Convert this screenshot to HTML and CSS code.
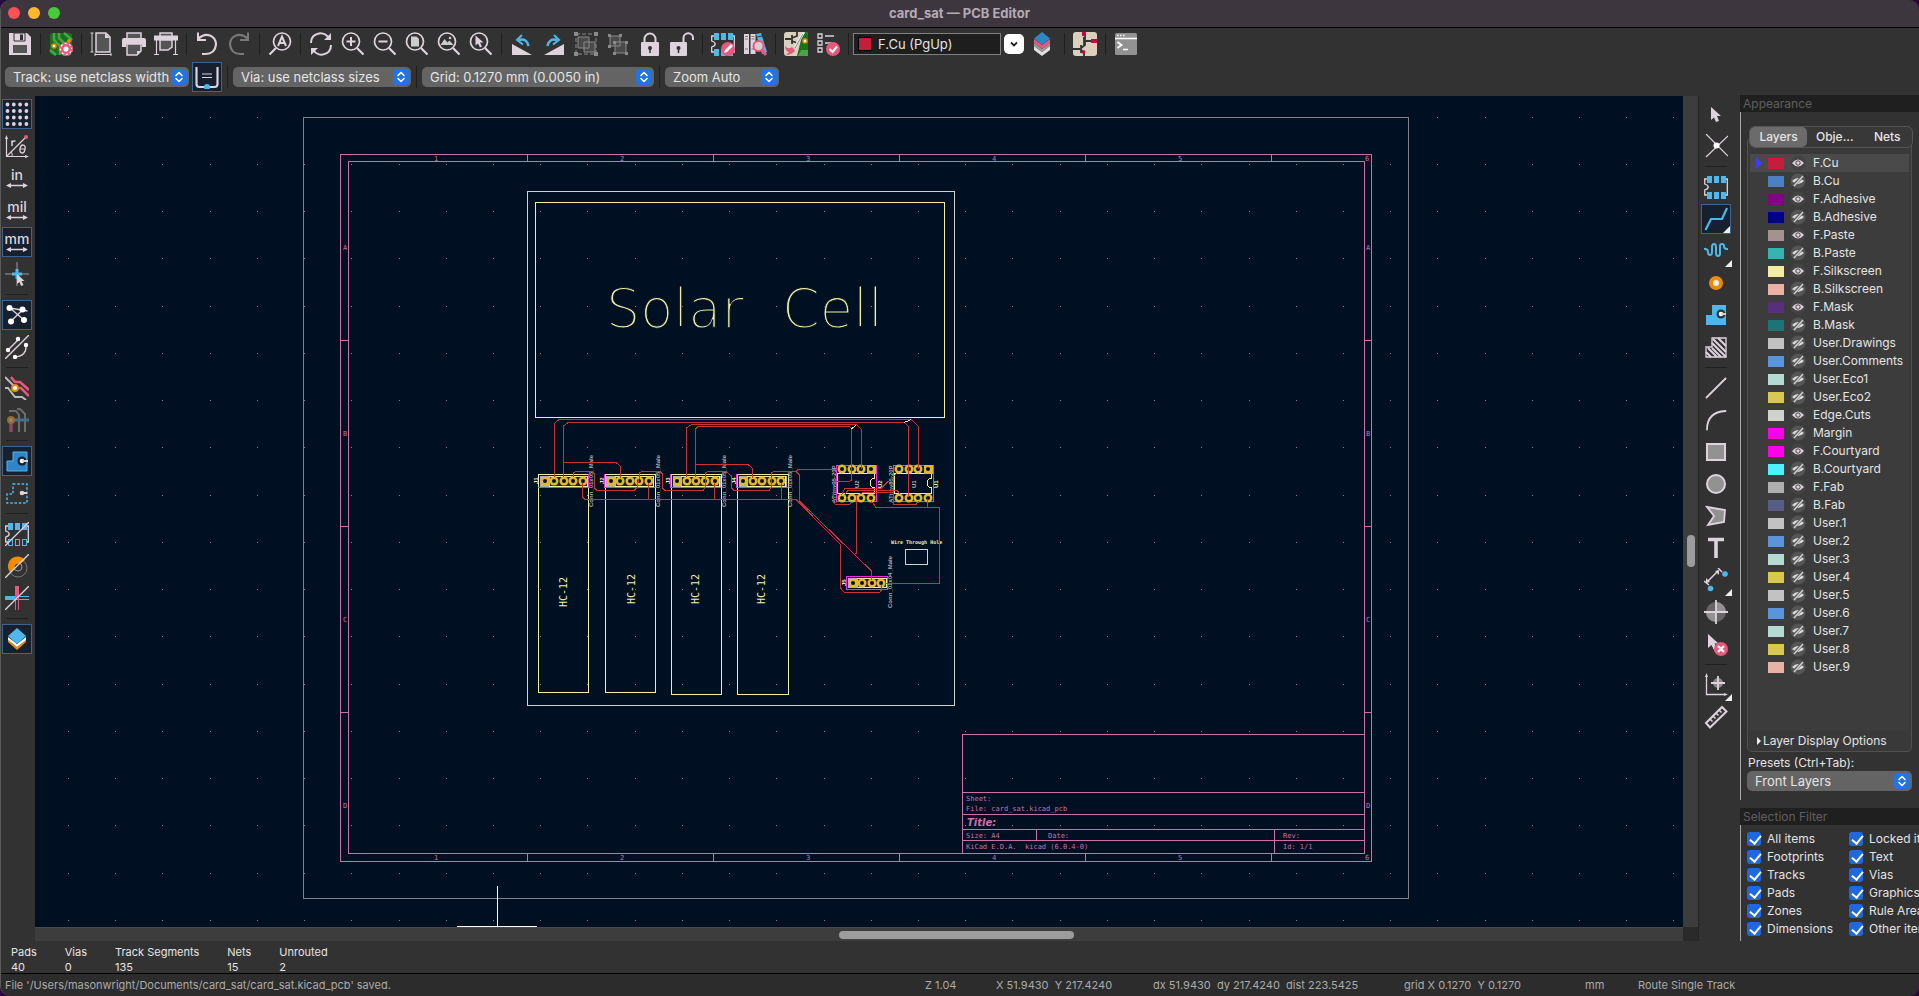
FILE: index.html
```html
<!DOCTYPE html>
<html lang="en">
<head>
<meta charset="utf-8">
<title>card_sat — PCB Editor</title>
<link rel="stylesheet" href="styles.css">
</head>
<body>
<svg class="defs" aria-hidden="true">
  <symbol id="updown" viewBox="0 0 16 16"><rect width="16" height="16" rx="4" fill="#2374e1"/><path d="M5 6.5l3-3 3 3M5 9.5l3 3 3-3" fill="none" stroke="#fff" stroke-width="1.6" stroke-linecap="round" stroke-linejoin="round"/></symbol>
  <symbol id="eye-on" viewBox="0 0 16 16"><circle cx="8" cy="8" r="7.5" fill="#434343"/><path d="M2 8q6-7 12 0q-6 7-12 0z" fill="#ded3dd"/><circle cx="8" cy="8" r="2.2" fill="#ded3dd" stroke="#434343"/></symbol>
  <symbol id="eye-off" viewBox="0 0 16 16"><circle cx="8" cy="8" r="7.5" fill="#555"/><path d="M2 8q6-6 12 0q-6 6-12 0z" fill="#d8d8d8"/><path d="M3.5 12.5l9-9" stroke="#555" stroke-width="3"/><path d="M4 13l9-10" stroke="#d8d8d8" stroke-width="1.3"/></symbol>
  <symbol id="corner" viewBox="0 0 7 7"><path d="M7 0v7H0z" fill="#eee"/></symbol>
  <symbol id="footprint" viewBox="0 0 24 24"><path d="M3 4H.7v5q3.5 1 3.500 3t-3.500 3v5H3M21 4h2.300v16H21" fill="none" stroke="#ded3dd" stroke-width="1.300"/><path d="M3 1h5v7H3zM10 1h5v7h-5zM17 1h5v7h-5zM3 17h5v7H3zM10 17h5v7h-5zM17 17h5v7h-5z" fill="#4fb8eb"/></symbol>
</svg>

<div class="window">
  <header class="titlebar">
    <div class="lights"><button class="light red" aria-label="Close"></button><button class="light yellow" aria-label="Minimize"></button><button class="light green" aria-label="Zoom"></button></div>
    <h1>card_sat — PCB Editor</h1>
  </header>

  <div class="toolbar top" role="toolbar" aria-label="Main">
    <button class="tool" aria-label="Save"><svg viewBox="0 0 24 24"><path d="M1 1h18l4 4v18H1z" fill="#ded3dd"/><path d="M6 1h11v8H6z" fill="#ded3dd" stroke="#323232"/><path d="M12 2.500h3V8h-3z" fill="#323232"/><path d="M5 13h14v8H5z" fill="#555"/></svg></button>
    <i class="sep"></i>
    <button class="tool" aria-label="Board setup"><svg viewBox="0 0 24 24"><rect x="1" y="1" width="22" height="22" rx="3" fill="#197319"/><path d="M5 1v7l6 6v9M10 1v5l7 7M15 1l8 7M1 18l6 5" fill="none" stroke="#4fa04a" stroke-width="2.500"/><circle cx="5" cy="14" r="2" fill="#fff" stroke="#ee8b00" stroke-width="1.500"/><circle cx="20" cy="9" r="2" fill="#ee8b00"/><circle cx="17" cy="17" r="4" fill="none" stroke="#fff" stroke-width="5"/><circle cx="17" cy="17" r="6" fill="none" stroke="#e8587c" stroke-width="2.500" stroke-dasharray="2.500 2.210"/><circle cx="17" cy="17" r="3.800" fill="#fff" stroke="#e8587c" stroke-width="2.500"/></svg></button>
    <i class="sep"></i>
    <button class="tool" aria-label="Page settings"><svg viewBox="0 0 24 24"><path d="M6 1h10l4 4v15H6z" fill="#555" stroke="#ded3dd" stroke-width="1.500"/><path d="M15 1v5h5z" fill="#ded3dd"/><path d="M2 1v19M.500 1h3M.500 20h3M5 22.500h16M5 21v3M21 21v3" stroke="#ded3dd"/></svg></button>
    <button class="tool" aria-label="Print"><svg viewBox="0 0 24 24"><path d="M5 1h14v6H5z" fill="#555" stroke="#ded3dd" stroke-width="1.500"/><path d="M2 6h20q2 0 2 2v7h-4v-3H4v3H0V8q0-2 2-2z" fill="#ded3dd"/><path d="M5 12h14v7l-4 4H5z" fill="#555" stroke="#ded3dd" stroke-width="1.500"/><path d="M15 23v-4h4z" fill="#ded3dd"/></svg></button>
    <button class="tool" aria-label="Plot"><svg viewBox="0 0 24 24"><path d="M6 1h12v5H6z" fill="#555" stroke="#ded3dd" stroke-width="1.500"/><path d="M0 3.500h24v5H0z" fill="#ded3dd"/><path d="M2.500 8v14M21.500 8v14M0 22.500h5M19 22.500h5" stroke="#ded3dd" stroke-width="1.200"/><path d="M6 8h12v7l-4 3H6z" fill="#555" stroke="#ded3dd" stroke-width="1.500"/></svg></button>
    <i class="sep"></i>
    <button class="tool" aria-label="Undo"><svg viewBox="0 0 24 24"><path d="M3 7q6-6 12-3.500Q21 6 21 12.500 20 22 10.500 22H7" fill="none" stroke="#ded3dd" stroke-width="2.200"/><path d="M3 .500V8h8" fill="none" stroke="#ded3dd" stroke-width="2"/></svg></button>
    <button class="tool" aria-label="Redo" disabled><svg viewBox="0 0 24 24"><path d="M21 7q-6-6-12-3.500Q3 6 3 12.500 4 22 13.500 22H17" fill="none" stroke="#787878" stroke-width="2.200"/><path d="M21 .500V8h-8" fill="none" stroke="#787878" stroke-width="2"/></svg></button>
    <i class="sep"></i>
    <button class="tool" aria-label="Find"><svg viewBox="0 0 24 24"><circle cx="14" cy="9.500" r="8.500" fill="none" stroke="#ded3dd" stroke-width="1.700"/><path d="M8 16l-6.500 6.500" stroke="#ded3dd" stroke-width="2.200"/><path d="M10 14l4-9.500L18 14M11.500 11h5" fill="none" stroke="#ded3dd" stroke-width="2"/></svg></button>
    <i class="sep"></i>
    <button class="tool" aria-label="Refresh"><svg viewBox="0 0 24 24"><path d="M2 11q0-8 8-9.500 6-1 11 5.500M22 13q0 8-8 9.500-6 1-11-5.500" fill="none" stroke="#ded3dd" stroke-width="2"/><path d="M22 1v7h-7zM2 23v-7h7z" fill="#ded3dd"/></svg></button>
    <button class="tool" aria-label="Zoom in"><svg viewBox="0 0 24 24"><circle cx="10" cy="9.500" r="8.500" fill="none" stroke="#ded3dd" stroke-width="1.700"/><path d="M16 16l6.500 6.500" stroke="#ded3dd" stroke-width="2.200"/><path d="M5.500 9.500h9M10 5v9" stroke="#ded3dd" stroke-width="2"/></svg></button>
    <button class="tool" aria-label="Zoom out"><svg viewBox="0 0 24 24"><circle cx="10" cy="9.500" r="8.500" fill="none" stroke="#ded3dd" stroke-width="1.700"/><path d="M16 16l6.500 6.500" stroke="#ded3dd" stroke-width="2.200"/><path d="M5.500 9.500h9" stroke="#ded3dd" stroke-width="2"/></svg></button>
    <button class="tool" aria-label="Zoom to fit"><svg viewBox="0 0 24 24"><circle cx="10" cy="9.500" r="8.500" fill="none" stroke="#ded3dd" stroke-width="1.700"/><path d="M16 16l6.500 6.500" stroke="#ded3dd" stroke-width="2.200"/><path d="M6 4.500h5.500L14 7v7.500H6z" fill="#ccc"/></svg></button>
    <button class="tool" aria-label="Zoom to objects"><svg viewBox="0 0 24 24"><circle cx="10" cy="9.500" r="8.500" fill="none" stroke="#ded3dd" stroke-width="1.700"/><path d="M16 16l6.500 6.500" stroke="#ded3dd" stroke-width="2.200"/><path d="M3.500 13l4-6 3 3.500 2-2 4 4.500z" fill="#ccc"/><circle cx="13" cy="6" r="1.300" fill="#ccc"/></svg></button>
    <button class="tool" aria-label="Zoom to selection"><svg viewBox="0 0 24 24"><circle cx="10" cy="9.500" r="8.500" fill="none" stroke="#ded3dd" stroke-width="1.700"/><path d="M16 16l6.500 6.500" stroke="#ded3dd" stroke-width="2.200"/><path d="M6.500 3.500v10l2.500-2 2 4 2-1-2-4h3.500z" fill="#ded3dd"/></svg></button>
    <i class="sep"></i>
    <button class="tool" aria-label="Rotate counterclockwise"><svg viewBox="0 0 24 24"><path d="M2 12v11h20z" fill="#ded3dd"/><path d="M9 8q8-2 9.500 6" fill="none" stroke="#4fb8eb" stroke-width="2.500"/><path d="M12 3L7 8l6 4.500" fill="none" stroke="#4fb8eb" stroke-width="2"/></svg></button>
    <button class="tool" aria-label="Rotate clockwise"><svg viewBox="0 0 24 24"><path d="M22 12v11H2z" fill="#ded3dd"/><path d="M15 8q-8-2-9.500 6" fill="none" stroke="#4fb8eb" stroke-width="2.500"/><path d="M12 3l5 5-6 4.500" fill="none" stroke="#4fb8eb" stroke-width="2"/></svg></button>
    <button class="tool" aria-label="Group" disabled><svg viewBox="0 0 24 24"><path d="M2 2h20v20H2z" fill="none" stroke="#8a8a8a" stroke-dasharray="4 2"/><path d="M0 0h4v4H0zM20 0h4v4h-4zM0 20h4v4H0zM20 20h4v4h-4z" fill="#8a8a8a"/><path d="M4 5h11v11H4zM10 10h11v10H10z" fill="#4a4a4a" stroke="#8a8a8a"/></svg></button>
    <button class="tool" aria-label="Ungroup" disabled><svg viewBox="0 0 24 24"><path d="M4 4h10v10H4zM9 10h11v11H9z" fill="#4a4a4a" stroke="#8a8a8a"/><path d="M2 2h3v3H2zM13 2h3v3h-3zM2 13h3v3H2zM7 9h3v3H7zM19 9h3v3h-3zM7 20h3v3H7zM19 20h3v3h-3z" fill="#8a8a8a"/></svg></button>
    <button class="tool" aria-label="Lock"><svg viewBox="0 0 24 24"><path d="M6.500 12V7a5.500 5.500 0 0 1 11 0v5" fill="none" stroke="#ded3dd" stroke-width="2"/><rect x="3" y="10" width="18" height="14" rx="1" fill="#ded3dd"/><circle cx="12" cy="16" r="2" fill="#323232"/><path d="M12 16v5" stroke="#323232" stroke-width="1.500"/></svg></button>
    <button class="tool" aria-label="Unlock"><svg viewBox="0 0 24 24"><path d="M13.500 12V6a4.700 4.700 0 0 1 9.500 0v2" fill="none" stroke="#ded3dd" stroke-width="2"/><rect x="0" y="10" width="17" height="14" rx="1" fill="#ded3dd"/><circle cx="8.500" cy="16" r="2" fill="#323232"/><path d="M8.500 16v5" stroke="#323232" stroke-width="1.500"/></svg></button>
    <i class="sep"></i>
    <button class="tool" aria-label="Footprint editor"><svg viewBox="0 0 24 24"><use href="#footprint"/><circle cx="17" cy="17" r="7" fill="#e8587c"/><path d="M13 21l1-3 6-6 2 2-6 6z" fill="#fff"/></svg></button>
    <button class="tool" aria-label="Footprint library browser"><svg viewBox="0 0 24 24"><path d="M1 2h5v20H1zM7.500 2h5v20h-5z" fill="#ded3dd"/><path d="M2 4.500h3M2 7h3M2 17h3M8.500 4.500h3M8.500 7h3M8.500 17h3" stroke="#777"/><path d="M13 2l5-1 6 19-5 2z" fill="#4fb8eb"/><path d="M14 5l5-1" stroke="#323232"/><circle cx="15.500" cy="14" r="5" fill="#d8d0d0" stroke="#e8587c" stroke-width="2"/><path d="M19 18l4 5" stroke="#e8587c" stroke-width="3"/></svg></button>
    <i class="sep"></i>
    <button class="tool" aria-label="Update PCB from schematic"><svg viewBox="0 0 24 24"><rect width="24" height="24" rx="3" fill="#d9d1bb"/><path d="M13 24L19 0h2q3 0 3 3v18q0 3-3 3z" fill="#197319"/><path d="M14 24l3-6h7v6z" fill="#4fa04a"/><path d="M1 7h6M8 3v9M8 6l5-2V0M8 9l5 2" fill="none" stroke="#333" stroke-width="1.800"/><circle cx="21" cy="9" r="2" fill="#fff" stroke="#ee8b00" stroke-width="1.500"/><path d="M20 0l-9 15" stroke="#eee" stroke-width="2.500"/><path d="M19 2l-8 14" stroke="#888"/><path d="M1 14q3 4 7 1l3 4q-4 4-9 4l3-3q-4-1-4-6z" fill="#e8587c"/></svg></button>
    <button class="tool" aria-label="Design rules checker"><svg viewBox="0 0 24 24"><path d="M2 2h4v4H2zM2 9h4v4H2zM2 16h4v4H2z" fill="none" stroke="#ded3dd" stroke-width="1.300"/><path d="M9 4h9M9 11h7" stroke="#ded3dd" stroke-width="1.500"/><circle cx="17" cy="17" r="7" fill="#e8587c"/><path d="M13.500 17l3 3 4.500-5.500" fill="none" stroke="#fff" stroke-width="2"/></svg></button>
    <i class="sep"></i>
    <div class="layer-combo"><span class="chip"></span><input type="text" aria-label="Active layer" value="F.Cu (PgUp)"></div>
    <button class="drop" aria-label="Choose layer"><svg viewBox="0 0 20 20"><path d="M7 8.500l3 3 3-3" fill="none" stroke="#222" stroke-width="1.800"/></svg></button>
    <button class="tool wide" aria-label="Layer pair"><svg viewBox="0 0 24 24"><path d="M4 14l8 6 8-6v4l-8 6-8-6z" fill="#e0e0e0"/><path d="M4 11l8 6 8-6v3l-8 6-8-6z" fill="#9a9a9a"/><path d="M4 7l8 6 8-6v4l-8 6-8-6z" fill="#e8587c"/><path d="M12 0l8 6.500-8 6.500-8-6.500z" fill="#2e86c8"/></svg></button>
    <i class="sep"></i>
    <button class="tool" aria-label="Schematic editor"><svg viewBox="0 0 24 24"><rect width="24" height="24" rx="3" fill="#d9d1bb"/><path d="M0 17h7M8 13v8M8 16l4-3V4M8 18l3 2v4M12 9h9M11 5v8" fill="none" stroke="#333" stroke-width="1.800"/><path d="M9 0h4v4H9zM18 7h6v4h-6zM9 18.500h3v3H9z" fill="#c30845"/></svg></button>
    <i class="sep"></i>
    <button class="tool" aria-label="Scripting console"><svg viewBox="0 0 24 24"><rect x="1" y="1" width="22" height="22" rx="1.500" fill="#929292"/><path d="M1 6.500h22M3 3.500h1.500M6 3.500h1.500M9 3.500h1.500M9 17.500h5" stroke="#fff" stroke-width="1.400"/><path d="M3.500 10l4 3-4 3" fill="none" stroke="#fff" stroke-width="1.800"/></svg></button>
  </div>

  <div class="toolbar second" role="toolbar" aria-label="Tracks and grid">
    <div class="pick track"><select aria-label="Track width"><option>Track: use netclass width</option></select><svg><use href="#updown"/></svg></div>
    <button class="tool on" aria-label="Use existing track width"><svg viewBox="0 0 24 24"><path d="M1.500 2v17q0 3 3 3h15q3 0 3-3V2" fill="none" stroke="#ded3dd" stroke-width="2.200"/><path d="M7 9h10M7 12.500h10" stroke="#ded3dd" stroke-width="1.200"/><circle cx="12" cy="22" r="3" fill="#4fb8eb"/></svg></button>
    <i class="sep"></i>
    <div class="pick via"><select aria-label="Via size"><option>Via: use netclass sizes</option></select><svg><use href="#updown"/></svg></div>
    <i class="sep"></i>
    <div class="pick grid"><select aria-label="Grid"><option>Grid: 0.1270 mm (0.0050 in)</option></select><svg><use href="#updown"/></svg></div>
    <i class="sep"></i>
    <div class="pick zoom"><select aria-label="Zoom"><option>Zoom Auto</option></select><svg><use href="#updown"/></svg></div>
  </div>

  <main class="work">
    <div class="side left" role="toolbar" aria-label="Display options">
      <button class="tool on" aria-label="Show grid"><svg viewBox="0 0 24 24"><path d="M2.500 2.500h20M2.500 9h20M2.500 15.500h20M2.500 22h20" stroke="#ded3dd" stroke-width="3.800" stroke-linecap="round" stroke-dasharray="0 6.300"/></svg></button>
      <button class="tool" aria-label="Polar coordinates"><svg viewBox="0 0 24 24"><path d="M1.500 3v19.500H21M2 22L21 3" fill="none" stroke="#ded3dd" stroke-width="1.200"/><path d="M0 5l1.500-4L3 5zM20 21l4 1.500-4 1.500z" fill="#ded3dd"/><circle cx="21" cy="3" r="2" fill="#e8587c"/><path d="M7 12V6.500M7 8.500q1-2 3.500-1.500" fill="none" stroke="#ded3dd" stroke-width="1.500"/><ellipse cx="17.500" cy="15" rx="2.500" ry="4" transform="rotate(12 17.500 15)" fill="none" stroke="#ded3dd" stroke-width="1.300"/><path d="M15 15h5M6 18q2 2 1 4" fill="none" stroke="#ded3dd"/></svg></button>
      <button class="tool unit"><span>in</span><svg viewBox="0 0 22 5"><path d="M2 2.500h18" stroke="#ded3dd" stroke-width="1.300"/><path d="M0 2.500L5 0v5zM22 2.500L17 0v5z" fill="#ded3dd"/></svg></button>
      <button class="tool unit"><span>mil</span><svg viewBox="0 0 22 5"><path d="M2 2.500h18" stroke="#ded3dd" stroke-width="1.300"/><path d="M0 2.500L5 0v5zM22 2.500L17 0v5z" fill="#ded3dd"/></svg></button>
      <button class="tool unit on"><span>mm</span><svg viewBox="0 0 22 5"><path d="M2 2.500h18" stroke="#ded3dd" stroke-width="1.300"/><path d="M0 2.500L5 0v5zM22 2.500L17 0v5z" fill="#ded3dd"/></svg></button>
      <button class="tool" aria-label="Full-window crosshair"><svg viewBox="0 0 24 24"><path d="M0 12h24M12 0v24" stroke="#999"/><path d="M7 12h10M12 7v10" stroke="#4fb8eb" stroke-width="3"/><path d="M12 12v10l2.500-2 1.500 4 2.500-1-2-4h3z" fill="#ded3dd"/></svg></button>
      <i class="sep"></i>
      <button class="tool on" aria-label="Show ratsnest"><svg viewBox="0 0 24 24"><path d="M4.500 5l18 3M5 19L17.500 7M5 5l14 12" stroke="#ded3dd" stroke-width="1.400"/><circle cx="4.500" cy="5" r="3" fill="#fff"/><circle cx="17.500" cy="6.500" r="3" fill="#fff"/><circle cx="6" cy="18.500" r="3" fill="#fff"/><circle cx="19" cy="17" r="3" fill="#fff"/></svg></button>
      <button class="tool" aria-label="Curved ratsnest"><svg viewBox="0 0 24 24"><path d="M0 24L24 0M3 15L13 5M21 10q1 11-11 12" fill="none" stroke="#ded3dd" stroke-width="1.400"/><circle cx="3" cy="15" r="2.200" fill="#fff"/><circle cx="13" cy="4" r="2.200" fill="#fff"/><circle cx="21" cy="10" r="2.200" fill="#fff"/><circle cx="10" cy="22" r="2.200" fill="#fff"/></svg></button>
      <i class="sep"></i>
      <button class="tool" aria-label="Net colors"><svg viewBox="0 0 24 24"><path d="M6 1l4 5h5l9 8M12 12h4l8 8" fill="none" stroke="#e8587c" stroke-width="2.500"/><path d="M0 1l10 10M0 12h3l7 9h7l4 3" fill="none" stroke="#bbb" stroke-width="2"/><circle cx="10" cy="12" r="3" fill="#fff" stroke="#ee8b00" stroke-width="1.800"/></svg></button>
      <button class="tool" aria-label="Dim inactive layers"><svg viewBox="0 0 24 24"><path d="M4 3h7l3 4v17M12 1h3l5 5v18" fill="none" stroke="#6c6c6c" stroke-width="2"/><path d="M6 13v11" stroke="#8c4a5c" stroke-width="3.500"/><path d="M6 12h18" stroke="#42708a" stroke-width="3"/><circle cx="6" cy="12" r="3" fill="#888" stroke="#9c6824" stroke-width="2"/></svg></button>
      <i class="sep"></i>
      <button class="tool on" aria-label="Filled zones"><svg viewBox="0 0 24 24"><path d="M8 3h14v19H2V12h6z" fill="#2e86c8" stroke="#4fb8eb"/><circle cx="17" cy="12" r="4.500" fill="#16202f"/><circle cx="17" cy="12" r="2.300" fill="#fff"/><path d="M17 12h6" stroke="#ded3dd" stroke-width="2"/></svg></button>
      <button class="tool" aria-label="Zone outlines"><svg viewBox="0 0 24 24"><path d="M8 3h14v19H2V13h6z" fill="none" stroke="#4fb8eb" stroke-width="1.500" stroke-dasharray="2.500 1.800"/><circle cx="17" cy="12" r="2.300" fill="#ded3dd"/><path d="M17 12h5" stroke="#ded3dd" stroke-width="2"/></svg></button>
      <i class="sep"></i>
      <button class="tool" aria-label="Sketch footprints"><svg viewBox="0 0 24 24"><use href="#footprint"/><path d="M4 18h3v5H4zM11 18h3v5h-3zM18 18h3v5h-3z" fill="#323232"/><path d="M0 24L24 0" stroke="#ded3dd" stroke-width="1.300"/></svg></button>
      <button class="tool" aria-label="Sketch vias"><svg viewBox="0 0 24 24"><circle cx="13" cy="14" r="9" fill="none" stroke="#777"/><circle cx="13" cy="13" r="4" fill="none" stroke="#999"/><path d="M5 18a9 9 0 1 1 15-12l-5 4a4 4 0 0 0-5.500 5z" fill="#ee8b00"/><path d="M0 24L24 0" stroke="#ded3dd" stroke-width="1.300"/></svg></button>
      <button class="tool" aria-label="Sketch tracks"><svg viewBox="0 0 24 24"><path d="M0 12h12" stroke="#4fb8eb" stroke-width="4"/><path d="M11 10.500h13M11 13.500h13" stroke="#4fb8eb"/><path d="M12 0v12" stroke="#e8587c" stroke-width="4"/><path d="M10.500 12v12M13.500 12v12" stroke="#e8587c"/><path d="M0 24L24 0" stroke="#ded3dd" stroke-width="1.300"/></svg></button>
      <i class="sep"></i>
      <button class="tool on" aria-label="Layers manager"><svg viewBox="0 0 24 24"><path d="M3 13l9 7 9-7v2l-9 8-9-8z" fill="#ee8b00"/><path d="M3 10l9 7 9-7v3l-9 7-9-7z" fill="#fff"/><path d="M12 1l9 8-9 8-9-8z" fill="#4fb8eb"/></svg></button>
    </div>

    <div class="viewport">
      <div class="canvas">
        <svg class="board" role="img" aria-label="Board layout">
          <g transform="translate(-35 -96)" shape-rendering="crispEdges">
            <g id="dots" fill="#7f8890"></g>
            <rect class="page" x="303.500" y="117.500" width="1105" height="781"/>
            <g class="frame">
              <rect x="340.500" y="154.500" width="1031" height="707"/>
              <rect x="348.500" y="161.500" width="1016" height="692"/>
              <path d="M527.500 154v7M713.500 154v7M899.500 154v7M1085.500 154v7M1271.500 154v7M527.500 854v7M713.500 854v7M899.500 854v7M1085.500 854v7M1271.500 854v7M341 340.500h7M341 526.500h7M341 712.500h7M1365 340.500h7M1365 526.500h7M1365 712.500h7"/>
              <path d="M962.500 853V734.500H1364M963 792.500h401M963 814.500h401M963 829.500h401M963 840.500h401M1036.500 830v11M1274.500 830v23"/>
            </g>
            <g class="frame-text marks">
              <text x="436" y="161">1</text><text x="622" y="161">2</text><text x="808" y="161">3</text><text x="994" y="161">4</text><text x="1180" y="161">5</text><text x="1367" y="161">6</text>
              <text x="436" y="860">1</text><text x="622" y="860">2</text><text x="808" y="860">3</text><text x="994" y="860">4</text><text x="1180" y="860">5</text><text x="1367" y="860">6</text>
              <text x="345" y="250">A</text><text x="345" y="436">B</text><text x="345" y="622">C</text><text x="345" y="808">D</text>
              <text x="1368" y="250">A</text><text x="1368" y="436">B</text><text x="1368" y="622">C</text><text x="1368" y="808">D</text>
            </g>
            <g class="frame-text">
              <text x="966" y="801">Sheet:</text><text x="966" y="811">File: card_sat.kicad_pcb</text>
              <text class="heading" x="967" y="826">Title:</text>
              <text x="966" y="838">Size: A4</text><text x="1048" y="838">Date:</text><text x="1283" y="838">Rev:</text>
              <text x="966" y="849">KiCad E.D.A.&#160; kicad (6.0.4-0)</text><text x="1283" y="849">Id: 1/1</text>
            </g>

            <rect class="edge" x="527.500" y="191.500" width="427" height="514"/>
            <rect class="edge" x="905.500" y="549.500" width="22" height="15"/>
            <g class="silk">
              <rect x="535.500" y="202.500" width="409" height="215"/>
              <rect x="538.500" y="474.500" width="50" height="218"/><rect x="605.500" y="474.500" width="50" height="218"/><rect x="671.500" y="474.500" width="50" height="220"/><rect x="737.500" y="474.500" width="51" height="220"/>
              <path d="M837.500 473.500h37v5a4 4 0 0 0 0 9v6h-37zM894.500 473.500h37v5a4 4 0 0 0 0 9v6h-37z"/>
            </g>
            <g class="silk-text">
              <text class="big" x="606" y="327">Solar</text><text class="big" x="782" y="327">Cell</text>
              <text class="hc" transform="translate(567 607) rotate(-90)">HC-12</text><text class="hc" transform="translate(635 604) rotate(-90)">HC-12</text><text class="hc" transform="translate(699 604) rotate(-90)">HC-12</text><text class="hc" transform="translate(765 604) rotate(-90)">HC-12</text>
              <text class="note" x="891" y="544">Wire Through Hole</text>
              <text class="tiny" transform="translate(538 484) rotate(-90)">J1</text><text class="tiny" transform="translate(604 484) rotate(-90)">J2</text><text class="tiny" transform="translate(670 484) rotate(-90)">J3</text><text class="tiny" transform="translate(736 484) rotate(-90)">J4</text><text class="tiny" transform="translate(846 586) rotate(-90)">J5</text>
              <text class="tiny" transform="translate(882 488) rotate(-90)">U2</text><text class="tiny" transform="translate(938 488) rotate(-90)">U1</text>
            </g>
            <g class="fab-text">
              <text transform="translate(593 507) rotate(-90)">Conn_01x05_Male</text><text transform="translate(660 507) rotate(-90)">Conn_01x05_Male</text><text transform="translate(726 507) rotate(-90)">Conn_01x05_Male</text><text transform="translate(792 507) rotate(-90)">Conn_01x05_Male</text>
              <text transform="translate(892 608) rotate(-90)">Conn_01x04_Male</text>
              <text transform="translate(836 503) rotate(-90)">ATtiny85-20P</text><text transform="translate(893 503) rotate(-90)">ATtiny85-20P</text>
              <text transform="translate(859 488) rotate(-90)">U2</text><text transform="translate(916 488) rotate(-90)">U1</text>
            </g>
            <g class="court">
              <path d="M538 487.500h51M588.500 474v13M604.500 474v13.500H655M670.500 474v13.500H721M736.500 474v13.500H788"/>
              <rect x="836.500" y="465.500" width="40" height="36"/><rect x="893.500" y="465.500" width="40" height="36"/><rect x="846.500" y="576.500" width="41" height="13"/>
            </g>
            <g class="header-box">
              <path d="M540 476.500h47v10h-47zM606 476.500h47v10h-47zM673 476.500h47v10h-47zM739 476.500h47v10h-47zM848 578.500h38v9h-38z"/>
            </g>
            <g class="silk"><path d="M549.500 476.500h38v10h-38zM615.500 476.500h38v10h-38zM681.500 476.500h38v10h-38zM747.500 476.500h38v10h-38zM857.500 578.500h29v9h-29z"/></g>
            <g id="pads" shape-rendering="auto"></g>
            <g class="trace">
              <path d="M554.500 477V423.500L559 419.500H911.500L918.500 426.500V469M563.500 477V426L568 422.500H904.500L908.500 426.500V497M686.500 477V428L691.500 424.500H856.500L861.500 429.500V469M695.500 477V429L698 426.500H849.500L851.500 428.500V480L849.500 481.500H833.500V502L835.500 504.500H849.500L852 502"/>
              <path d="M563.500 462.500H616L620.500 466.500V478M695.500 464.500H748L752.500 468.500V478"/>
              <path d="M573.500 477V473L575.500 471.500H592L594.500 474V488L597 490.500H634L637 487.500 639.500 477V473L642 471.500H660L662.500 474V488L665 490.500H703L705.500 487.500V473L708 471.500H726L731.500 476V488L734 490.500H769L771.500 487.500V473L774 471.500H796L799.500 475V501L871.500 571V580"/>
              <path d="M582.500 483V497L585 499.500H796L840.500 544.500V588L844.500 592.500H879.500L881.500 590V585M648.500 483V499M714.500 483V499M781.500 483V499M796 471.500L798 469.500H837"/>
              <path d="M856.500 495V553L854 555M841.500 495L845 488.500H881L897 473M845 494L848 490.500H897L900 494M860 494L863 492.500H893.500V504.500H916L918.500 501M871.500 501L876 507.500H939.500V583.500H886M927.500 499V507"/>
            </g>
            <path class="rats" d="M851.500 429L856.500 424.500M904 422.500L911.500 419.500"/>
            <path d="M497.500 886v40M457 926.500h80" stroke="#fff" fill="none"/>
          </g>
        </svg>
      </div>
      <div class="vscroll"><span class="thumb"></span></div>
      <div class="hscroll"><span class="thumb"></span></div>
      <div class="scroll-corner"></div>
    </div>

    <div class="side right" role="toolbar" aria-label="Drawing tools">
      <button class="tool" aria-label="Select"><svg viewBox="0 0 24 24"><path d="M7 5v13l3-2.500 2 4.500 3-1-2-5h4z" fill="#ded3dd"/></svg></button>
      <button class="tool" aria-label="Local ratsnest"><svg viewBox="0 0 24 24"><path d="M2 0l22 22M24 2L2 23" stroke="#ded3dd" stroke-width="1.200"/><circle cx="12.500" cy="11.500" r="3" fill="#fff"/></svg></button>
      <i class="sep"></i>
      <button class="tool" aria-label="Add footprint"><svg viewBox="0 0 24 24"><use href="#footprint"/></svg></button>
      <button class="tool on" aria-label="Route tracks"><svg viewBox="0 0 24 24"><path d="M1.500 23L7 12h11l5-11" fill="none" stroke="#4fb8eb" stroke-width="2.200"/></svg><svg class="more"><use href="#corner"/></svg></button>
      <button class="tool" aria-label="Tune length"><svg viewBox="0 0 24 24"><path d="M0 10h1q3 0 3 3 0 3 2 3t2-3V8q0-3 2-3t2 3v6q0 3 2 3t2-3V7q0-2 2-2t2 2q0 3 3 3h1" fill="none" stroke="#4fb8eb" stroke-width="2"/></svg><svg class="more"><use href="#corner"/></svg></button>
      <button class="tool" aria-label="Add via"><svg viewBox="0 0 24 24"><circle cx="12" cy="12" r="5" fill="#eee" stroke="#ee8b00" stroke-width="4"/></svg></button>
      <button class="tool" aria-label="Add zone"><svg viewBox="0 0 24 24"><path d="M8 2h14v20H2V12h6z" fill="#4fb8eb"/><circle cx="17" cy="11" r="4.500" fill="#323232"/><circle cx="17" cy="11" r="2.300" fill="#fff"/><path d="M17 11h5" stroke="#ded3dd" stroke-width="2"/></svg></button>
      <button class="tool" aria-label="Add rule area"><svg viewBox="0 0 24 24"><path d="M8 3h14v19H2V12h6z" fill="#333" stroke="#ded3dd" stroke-width="1.300"/><path d="M9 4l13 13M14 3l8 8M8 8l14 14M8 13l9 9M4 13l9 9M2 17l5 5" stroke="#ded3dd" stroke-width="2"/></svg></button>
      <i class="sep"></i>
      <button class="tool" aria-label="Line"><svg viewBox="0 0 24 24"><path d="M2.500 21.500l19-19" stroke="#ded3dd" stroke-width="1.800" stroke-linecap="round"/></svg></button>
      <button class="tool" aria-label="Arc"><svg viewBox="0 0 24 24"><path d="M3 21.500Q3 4 21.500 3" fill="none" stroke="#ded3dd" stroke-width="1.800" stroke-linecap="round"/></svg></button>
      <button class="tool" aria-label="Rectangle"><svg viewBox="0 0 24 24"><path d="M3 4h18v16H3z" fill="#929292" stroke="#ded3dd" stroke-width="2"/></svg></button>
      <button class="tool" aria-label="Circle"><svg viewBox="0 0 24 24"><circle cx="12" cy="12" r="9" fill="#929292" stroke="#ded3dd" stroke-width="2"/></svg></button>
      <button class="tool" aria-label="Polygon"><svg viewBox="0 0 24 24"><path d="M3 3l18 3-1 12-16 3 6-9z" fill="#929292" stroke="#ded3dd" stroke-width="1.800"/></svg></button>
      <button class="tool" aria-label="Text"><svg viewBox="0 0 24 24"><path d="M4 3.500h16M12 3.500V22" stroke="#ded3dd" stroke-width="3.600"/></svg></button>
      <button class="tool" aria-label="Dimension"><svg viewBox="0 0 24 24"><path d="M3 14L14 3M0 13l5 4M14 0l4 4" stroke="#ded3dd" stroke-width="1.500"/><path d="M2 15v-5l4 4zM15 2v5l-4-4z" fill="#ded3dd"/><circle cx="6.500" cy="20.500" r="2.800" fill="#4fb8eb"/><circle cx="21" cy="6" r="2.800" fill="#4fb8eb"/></svg><svg class="more"><use href="#corner"/></svg></button>
      <button class="tool" aria-label="Layer alignment target"><svg viewBox="0 0 24 24"><circle cx="12" cy="12" r="10" fill="#666"/><path d="M12 2a10 10 0 0 1 10 10H12zM12 22A10 10 0 0 1 2 12h10z" fill="#929292"/><path d="M0 12h24M12 0v24" stroke="#ded3dd" stroke-width="1.800"/></svg></button>
      <button class="tool" aria-label="Delete"><svg viewBox="0 0 24 24"><path d="M4 2v14l3.500-3 3 6 3-1.500-3-6h4z" fill="#ded3dd"/><circle cx="17" cy="17" r="7" fill="#e8587c"/><path d="M14 14l6 6M20 14l-6 6" stroke="#fff" stroke-width="2.200"/></svg></button>
      <i class="sep"></i>
      <button class="tool" aria-label="Set origin"><svg viewBox="0 0 24 24"><path d="M2.500 3v18.500H20" fill="none" stroke="#ded3dd" stroke-width="1.300"/><path d="M1 4l1.500-4L4 4zM20 20l4 1.500-4 1.500z" fill="#ded3dd"/><circle cx="14" cy="10" r="5" fill="#888"/><path d="M7 10h14M14 3v14" stroke="#ded3dd" stroke-width="1.800"/></svg><svg class="more"><use href="#corner"/></svg></button>
      <button class="tool" aria-label="Measure"><svg viewBox="0 0 24 24"><path d="M2 18L18 2l4.500 4.500L6 22.500z" fill="none" stroke="#ded3dd" stroke-width="2"/><path d="M6 14l2.500 2.500M9 11l2.500 2.500M12 8l2.500 2.500M15 5l2.500 2.500" stroke="#ded3dd" stroke-width="1.500"/></svg></button>
    </div>

    <aside class="panels">
      <section class="appearance">
        <h2>Appearance</h2>
        <div class="panel-body">
          <div class="notebook">
            <div class="tabs" role="tablist"><button class="tab active" role="tab" aria-selected="true">Layers</button><button class="tab" role="tab">Obje...</button><button class="tab" role="tab">Nets</button></div>
            <ul class="layers" id="layers"></ul>
            <button class="disclose"><svg viewBox="0 0 6 10"><path d="M1 1l4 4-4 4z" fill="#eee"/></svg>Layer Display Options</button>
          </div>
          <label class="presets" for="preset">Presets (Ctrl+Tab):</label>
          <div class="pick"><select id="preset"><option>Front Layers</option></select><svg><use href="#updown"/></svg></div>
        </div>
      </section>
      <section class="filter">
        <h2>Selection Filter</h2>
        <div class="checks">
          <label><input type="checkbox" checked>All items</label><label><input type="checkbox" checked>Locked items</label>
          <label><input type="checkbox" checked>Footprints</label><label><input type="checkbox" checked>Text</label>
          <label><input type="checkbox" checked>Tracks</label><label><input type="checkbox" checked>Vias</label>
          <label><input type="checkbox" checked>Pads</label><label><input type="checkbox" checked>Graphics</label>
          <label><input type="checkbox" checked>Zones</label><label><input type="checkbox" checked>Rule Areas</label>
          <label><input type="checkbox" checked>Dimensions</label><label><input type="checkbox" checked>Other items</label>
        </div>
      </section>
    </aside>
  </main>

  <dl class="stats">
    <div><dt>Pads</dt><dd>40</dd></div><div><dt>Vias</dt><dd>0</dd></div><div><dt>Track Segments</dt><dd>135</dd></div><div><dt>Nets</dt><dd>15</dd></div><div><dt>Unrouted</dt><dd>2</dd></div>
  </dl>
  <footer class="status">
    <span>File '/Users/masonwright/Documents/card_sat/card_sat.kicad_pcb' saved.</span><span>Z 1.04</span><span>X 51.9430&#160; Y 217.4240</span><span>dx 51.9430&#160; dy 217.4240&#160; dist 223.5425</span><span>grid X 0.1270&#160; Y 0.1270</span><span>mm</span><span>Route Single Track</span>
  </footer>
</div>
<script src="board.js"></script>
</body>
</html>
```

FILE: styles.css
```css
* { box-sizing: border-box; }
html, body { height: 100%; margin: 0; }
body {
  background: #2a0a3c;
  color: #e4e4e4;
  font: 12px/18px Inter, "Liberation Sans", sans-serif;
  overflow: hidden;
}
button, select, input { font: inherit; color: inherit; margin: 0; }
button { border: 0; padding: 0; background: none; }
.defs { position: absolute; width: 0; height: 0; }

.window {
  display: flex;
  flex-direction: column;
  height: 100vh;
  overflow: hidden;
  border-left: 1px solid #5a5a5a;
  border-radius: 10px;
  background: #323232;
}

.titlebar {
  display: grid;
  grid-template-columns: 1fr auto 1fr;
  align-items: center;
  height: 28px;
  padding: 0 8px 2px 7px;
  background: #3e363e;
  border-bottom: 1px solid #000;
}
.titlebar h1 { margin: 0; font-size: 13px; font-weight: 700; color: #b5abb5; }
.lights { display: flex; gap: 8px; }
.light { width: 12px; height: 12px; border-radius: 50%; }
.red { background: #fc4f56; }
.yellow { background: #fdb92c; }
.green { background: #48cb38; }

.toolbar { display: flex; align-items: center; flex: none; }
.top { height: 32px; padding-left: 3px; }
.second { height: 36px; padding: 0 0 2px 4px; }
.tool {
  display: flex;
  align-items: center;
  justify-content: center;
  flex: none;
  position: relative;
  width: 32px;
  height: 32px;
}
.tool > svg { width: 24px; height: 24px; }
.tool.on { width: 30px; height: 30px; margin: 1px; background: #16202f; border: 1px solid #3d6390; }
.tool.wide { width: 36px; }
.tool .more { position: absolute; right: 0; bottom: 0; width: 7px; height: 7px; }
.sep { flex: none; width: 1px; height: 22px; margin: 0 4px; background: #1f1f1f; }
.second .sep { margin: 0 5px; }
.second .tool.on { margin: 0 0 0 3px; }

.layer-combo {
  display: flex;
  align-items: center;
  gap: 6px;
  width: 148px;
  height: 22px;
  margin-right: 3px;
  padding: 0 4px;
  background: #1e1e1e;
  border: 1px solid #808080;
}
.layer-combo input { min-width: 0; flex: 1; padding: 0; border: 0; background: none; font-size: 13px; outline: 0; }
.chip { flex: none; width: 14px; height: 14px; background: #c41e3a; border: 1px solid #000; }
.drop { width: 20px; height: 20px; border-radius: 5px; background: #fff; }
.drop svg { display: block; width: 20px; height: 20px; }

.pick { position: relative; height: 20px; }
.pick select {
  display: block;
  appearance: none;
  width: 100%;
  height: 20px;
  padding: 0 18px 0 8px;
  border: 0;
  border-radius: 5px;
  background: #646464;
  font-size: 13px;
  line-height: 20px;
}
.pick svg { position: absolute; right: 2px; top: 2px; width: 16px; height: 16px; pointer-events: none; }
.track { width: 184px; }
.via { width: 178px; }
.grid { width: 232px; }
.zoom { width: 114px; }

.work { display: flex; flex: 1; min-height: 0; }
.side { display: flex; flex-direction: column; align-items: center; flex: none; padding-top: 2px; }
.side .sep { width: 22px; height: 1px; margin: 4px 0; }
.left { width: 34px; padding-right: 2px; }
.right { width: 42px; padding-right: 8px; border-left: 1px solid #242424; }
.unit { flex-direction: column; gap: 1px; color: #ded3dd; }
.unit span { font: 500 14px/14px Inter, sans-serif; }
.unit > svg { width: 22px; height: 5px; }

.viewport {
  display: grid;
  flex: 1;
  min-width: 0;
  grid-template: minmax(0, 1fr) 14px / minmax(0, 1fr) 15px;
}
.canvas { background: #001023; overflow: hidden; }
.board { display: block; width: 100%; height: 100%; }
.hscroll, .vscroll { display: flex; background: #3d3d3d; }
.hscroll { border-top: 1px solid #4a4a4a; align-items: center; }
.vscroll { flex-direction: column; align-items: center; }
.hscroll::before, .vscroll::before { content: ""; flex: 804 0 0; }
.vscroll::before { flex: 439 0 0; }
.hscroll .thumb { flex: 235 0 0; height: 8px; }
.vscroll .thumb { flex: 32 0 0; width: 8px; }
.hscroll::after { content: ""; flex: 609 0 0; }
.vscroll::after { content: ""; flex: 360 0 0; }
.thumb { border-radius: 4px; background: #9c9c9c; }
.scroll-corner { background: #2a2a2a; }

.page, .frame, .silk, .edge, .court, .trace, .rats { fill: none; stroke-width: 1; }
.page { stroke: #848484; }
.frame { stroke: #c872a8; }
.frame-text { fill: #c872a8; font: 7px/1 "DejaVu Sans Mono", monospace; }
.marks { text-anchor: middle; }
.heading { font: italic 700 10px/1 "DejaVu Sans", sans-serif; }
.edge { stroke: #d0d2cd; }
.silk { stroke: #f2eda1; }
.silk-text { fill: #f2eda1; }
.big { font: 200 54px/1 "DejaVu Sans", sans-serif; stroke: #001023; stroke-width: 1; }
.hc { font: 10px/1 "DejaVu Sans Mono", monospace; }
.tiny { font: 700 6px/1 "Liberation Sans", sans-serif; }
.note { font: 700 5px/1 "DejaVu Sans Mono", monospace; }
.fab-text { fill: #afafaf; font: 700 6px/1 "Liberation Sans", sans-serif; }
.court { stroke: #ff26e2; }
.header-box { fill: #1b2430; stroke: #afafaf; }
.trace { stroke: #c83434; }
.rats { stroke: #e8dcc8; }

.panels { display: flex; flex-direction: column; flex: none; width: 179px; margin-top: -1px; overflow: hidden; }
.panels h2 {
  margin: 0;
  height: 17px;
  padding-left: 3px;
  background: #1f1f1f;
  color: #5f5f5f;
  font-size: 12px;
  line-height: 17px;
  font-weight: 400;
}
.appearance { display: flex; flex-direction: column; flex: 1; }
.panel-body {
  display: flex;
  flex-direction: column;
  flex: 1;
  margin-bottom: 8px;
  padding: 14px 7px 9px 6px;
  border-left: 1px solid #a8a8a8;
}
.notebook {
  display: flex;
  flex-direction: column;
  flex: 1;
  margin-top: 11px;
  border: 1px solid #505050;
  border-radius: 5px;
  background: #393939;
}
.tabs {
  display: flex;
  height: 22px;
  margin: -12px -2px 6px 1px;
  border: 1px solid #555;
  border-radius: 6px;
  background: #383838;
}
.tab { flex: 1; padding-left: 3px; border-radius: 5px; font-weight: 500; white-space: nowrap; }
.tab.active { flex: none; width: 57px; padding-left: 0; background: #6b6b6b; }
.layers { flex: 1; margin: 0 2px; padding: 0; list-style: none; background: #3c3c3c; }
.layer { display: flex; align-items: center; height: 18px; padding-left: 6px; }
.layer.current { background: #4a4a4a; }
.mark { width: 12px; height: 12px; }
.swatch { width: 16px; height: 11px; margin-right: 6px; }
.eye { width: 16px; height: 16px; margin-right: 7px; }
.eye svg { display: block; width: 16px; height: 16px; }
.disclose { display: flex; align-items: center; gap: 1px; height: 20px; padding-left: 8px; font-size: 12px; }
.disclose svg { width: 6px; height: 10px; }
.presets { display: block; height: 19px; padding-left: 1px; line-height: 21px; }

.filter { margin-bottom: -1px; }
.checks {
  display: grid;
  grid-template-columns: 102px 102px;
  grid-auto-rows: 18px;
  padding: 5px 0 4px 6px;
  border-left: 1px solid #a8a8a8;
}
.checks label { display: flex; align-items: center; gap: 6px; white-space: nowrap; }
.checks input {
  appearance: none;
  width: 14px;
  height: 14px;
  border-radius: 3px;
  background: #2068e0;
}
.checks input:checked::before {
  content: "";
  display: block;
  width: 5px;
  height: 9px;
  margin: 1px 0 0 5px;
  border: solid #fff;
  border-width: 0 2px 2px 0;
  transform: rotate(40deg);
}

.stats { display: flex; gap: 28px; flex: none; height: 32px; margin: 0; padding: 4px 0 0 10px; font-size: 11px; line-height: 15px; }
.stats dd { margin: 0; }
.status {
  display: grid;
  grid-template-columns: 920fr 71fr 157fr 251fr 181fr 53fr 281fr;
  flex: none;
  height: 23px;
  padding-left: 4px;
  border-top: 1px solid #000;
  background: #2c2c2c;
  color: #aaa;
  font-size: 11px;
  line-height: 22px;
  white-space: nowrap;
}
```

FILE: board.js
```js
const SVG = "http://www.w3.org/2000/svg";

function shape(parent, name, attrs) {
  const el = document.createElementNS(SVG, name);
  for (const key in attrs) el.setAttribute(key, attrs[key]);
  parent.appendChild(el);
}

// Grid dots, one every 47.22 px in canvas space
const dots = document.getElementById("dots");
for (let i = 0; i < 36; i++) {
  for (let j = 0; j < 18; j++) {
    shape(dots, "rect", { x: Math.round(68 + i * 47.22), y: Math.round(116.600 + j * 47.25), width: 1, height: 1 });
  }
}

// Pad rows: y, x positions, index of the square pad
const rows = [
  [481, [545, 554, 564, 573, 583], 0],
  [481, [611, 620, 630, 639, 649], 0],
  [481, [677, 687, 696, 705, 715], 0],
  [481, [743, 753, 762, 772, 781], 0],
  [469, [842, 852, 861, 871], 3],
  [498, [842, 852, 861, 871], -1],
  [469, [899, 909, 918, 928], 3],
  [498, [899, 909, 918, 928], -1],
  [583, [853, 862, 872, 881], 0]
];
const pads = document.getElementById("pads");
for (const [y, xs, square] of rows) {
  xs.forEach((x, i) => {
    if (i === square) shape(pads, "rect", { x: x - 4, y: y - 4, width: 9, height: 9, fill: "#e3b72e" });
    else shape(pads, "circle", { cx: x, cy: y, r: 4.500, fill: "#e3b72e" });
    shape(pads, "circle", { cx: x, cy: y, r: 2, fill: "#001023" });
  });
}

// Layer name, color, visible
const layers = [
  ["F.Cu", "#c41e3a", 1], ["B.Cu", "#4d7fc4", 0], ["F.Adhesive", "#840084", 1], ["B.Adhesive", "#000084", 0],
  ["F.Paste", "#a39290", 1], ["B.Paste", "#35b5b2", 0], ["F.Silkscreen", "#f2eda1", 1], ["B.Silkscreen", "#e8b2a7", 0],
  ["F.Mask", "#582f7c", 1], ["B.Mask", "#1f7275", 0], ["User.Drawings", "#c2c2c2", 0], ["User.Comments", "#5994dc", 0],
  ["User.Eco1", "#b4dbd2", 0], ["User.Eco2", "#d8c852", 0], ["Edge.Cuts", "#d0d2cd", 1], ["Margin", "#ff00e8", 0],
  ["F.Courtyard", "#ff00e8", 1], ["B.Courtyard", "#4ff0ff", 0], ["F.Fab", "#afafaf", 1], ["B.Fab", "#585d84", 0],
  ["User.1", "#c2c2c2", 0], ["User.2", "#5994dc", 0], ["User.3", "#b4dbd2", 0], ["User.4", "#d8c852", 0],
  ["User.5", "#c2c2c2", 0], ["User.6", "#5994dc", 0], ["User.7", "#b4dbd2", 0], ["User.8", "#d8c852", 0],
  ["User.9", "#e8b2a7", 0]
];
document.getElementById("layers").innerHTML = layers.map(([name, color, visible], i) => `
  <li class="layer${i ? "" : " current"}">
    <svg class="mark" viewBox="0 0 12 12">${i ? "" : '<path d="M0 0l6 6-6 6z" fill="#3d3dff"/>'}</svg>
    <span class="swatch" style="background:${color}"></span>
    <button class="eye" aria-label="Toggle ${name}"><svg><use href="#eye-${visible ? "on" : "off"}"/></svg></button>
    <span>${name}</span>
  </li>`).join("");
```
